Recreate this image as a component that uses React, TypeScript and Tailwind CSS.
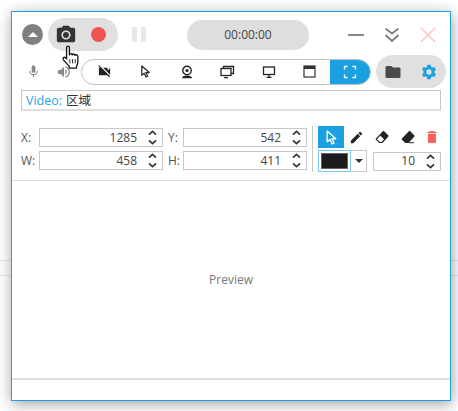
import type { ReactNode } from "react";
import {
  MdPhotoCamera,
  MdMic,
  MdVolumeUp,
  MdVideocamOff,
  MdFolder,
  MdSettings,
  MdEdit,
  MdDelete,
} from "react-icons/md";

const font = "font-['Open_Sans','Noto_Sans_CJK_SC',sans-serif]";

function Arrows() {
  return (
    <svg width="9" height="15" viewBox="0 0 9 15" fill="none" stroke="#333" strokeWidth="1.7">
      <path d="M1 4.6 4.5 1.4 8 4.6" />
      <path d="M1 10.4l3.5 3.2L8 10.4" />
    </svg>
  );
}

function NumberBox({ value, width }: { value: string; width: string }) {
  return (
    <div className={`${width} h-[19px] border border-[#c8c8c8] bg-white flex items-center justify-end pr-[5px] gap-[11px] text-[12px] text-[#444]`}>
      <span>{value}</span>
      <Arrows />
    </div>
  );
}

function Label({ children, width }: { children: ReactNode; width: string }) {
  return <span className={`${width} text-[12px] text-[#555]`}>{children}</span>;
}

function Pointer({ stroke = "#222", size = 14 }: { stroke?: string; size?: number }) {
  return (
    <svg width={size} height={size} viewBox="0 0 14 14">
      <path d="M3 1v10l2.6-2.2L7.6 13l1.8-.9-2-4H11z" fill="none" stroke={stroke} strokeWidth="1.3" strokeLinejoin="round" />
    </svg>
  );
}

function Webcam() {
  return (
    <svg width="14" height="14" viewBox="0 0 14 14">
      <circle cx="7" cy="5.5" r="4.2" fill="none" stroke="#222" strokeWidth="1.4" />
      <circle cx="7" cy="5.5" r="1.6" fill="#222" />
      <path d="M2 13.2c0-2 2-2.8 5-2.8s5 .8 5 2.8z" fill="#222" />
    </svg>
  );
}

function Screens() {
  return (
    <svg width="15" height="14" viewBox="0 0 15 14" fill="none" stroke="#222" strokeWidth="1.3">
      <path d="M3.5 3V1.5h10v7H11" />
      <rect x="1" y="3.5" width="10" height="7" fill="#fff" />
      <path d="M4 12.6h4" />
    </svg>
  );
}

function Desktop() {
  return (
    <svg width="14" height="14" viewBox="0 0 14 14" fill="none" stroke="#222" strokeWidth="1.3">
      <rect x="1.5" y="2" width="11" height="7.5" />
      <path d="M7 9.5v2.5M4.5 12.3h5" />
    </svg>
  );
}

function WindowIcon() {
  return (
    <svg width="13" height="13" viewBox="0 0 13 13">
      <rect x="1" y="1" width="11" height="11" fill="none" stroke="#333" strokeWidth="1.2" />
      <rect x="1" y="1" width="11" height="3" fill="#333" />
    </svg>
  );
}

function FullArea() {
  return (
    <svg width="14" height="14" viewBox="0 0 14 14" fill="none" stroke="#fff" strokeWidth="1.3">
      <path d="M1.5 4.5v-3h3M9.5 1.5h3v3M12.5 9.5v3h-3M4.5 12.5h-3v-3" />
    </svg>
  );
}

function Eraser({ outline }: { outline?: boolean }) {
  return (
    <svg width="14" height="14" viewBox="0 0 14 14">
      <path d="M8.5 1.5 13 6l-6 6.5H4.5L1.2 9.2z" fill={outline ? "#fff" : "#222"} stroke="#222" strokeWidth="1.2" strokeLinejoin="round" />
      {outline ? <path d="M8.5 1.5 13 6l-3.6 3.8L5 5.3z" fill="#222" /> : <path d="M8 12.7h5" stroke="#222" strokeWidth="1" />}
    </svg>
  );
}

function HandCursor() {
  return (
    <svg width="22" height="26" viewBox="0 0 20 24" className="absolute left-[5px] top-[20px] z-10">
      <path
        d="M5 2.2c0-1.6 2.6-1.6 2.6 0V9c.3-1.5 2.6-1.4 2.7.2.4-1.3 2.5-1.1 2.6.4.5-1 2.4-.8 2.5.8v5.2c0 1.8-.7 2.8-1.3 4.4v1.4H7.5v-1.6C6.3 18.2 3.6 15.7 2 13.5c-1-1.6.8-2.9 2-1.7l1 1z"
        fill="#fff"
        stroke="#111"
        strokeWidth="1.2"
        strokeLinejoin="round"
      />
      <path d="M8 13v4M10.5 13v4M13 13v4" stroke="#111" strokeWidth=".8" />
    </svg>
  );
}

export default function App() {
  return (
    <div className={`relative w-[458px] h-[411px] overflow-hidden bg-white ${font}`}>
      {/* page lines behind the window */}
      <div className="absolute left-0 right-0 top-[260px] h-px bg-[#e2e2e8]" />
      <div className="absolute left-0 right-0 top-[275px] h-px bg-[#e2e2e8]" />

      <div className="absolute left-[11px] top-[11px] w-[440px] h-[390px] flex flex-col bg-white border border-[#1ba1e2] shadow-[1px_3px_14px_rgba(0,0,0,0.38)]">
        {/* top row */}
        <div className="flex items-center h-[33px] mt-[6px] pl-[10px]">
          <div className="w-[21px] h-[21px] rounded-full bg-[#808080] flex items-center justify-center">
            <div className="w-0 h-0 border-x-[5px] border-x-transparent border-b-[5px] border-b-white" />
          </div>
          <div className="ml-[5px] w-[70px] h-[33px] rounded-full bg-[#e0e0e0] flex items-center pl-[8px] gap-[15px]">
            <div className="relative w-5 h-5">
              <MdPhotoCamera size={22} className="text-[#333] -ml-px -mt-px" />
              <HandCursor />
            </div>
            <div className="w-[15px] h-[15px] rounded-full bg-[#ef5350]" />
          </div>
          <div className="ml-[14px] flex gap-[4px]">
            <div className="w-[5px] h-[15px] bg-[#e8e8e8]" />
            <div className="w-[5px] h-[15px] bg-[#e8e8e8]" />
          </div>
          <div className="ml-[41px] w-[122px] h-[30px] rounded-full bg-[#dedede] flex items-center justify-center text-[12px] text-[#444]">
            00:00:00
          </div>
          <div className="ml-[39px] w-[16px] h-[2px] bg-[#888]" />
          <svg width="16" height="16" viewBox="0 0 16 16" className="ml-[20px]" fill="none" stroke="#808080" strokeWidth="2">
            <path d="m1.5 1.5 6.5 5 6.5-5M1.5 8l6.5 6 6.5-6" />
          </svg>
          <svg width="16" height="16" viewBox="0 0 16 16" className="ml-[20px]" fill="none" stroke="#ffc4c4" strokeWidth="1.6">
            <path d="m1 1 14 14M15 1 1 15" />
          </svg>
        </div>

        {/* source row */}
        <div className="flex items-center h-[33px] mt-[4px] pl-[14px]">
          <MdMic size={15} className="text-[#8a8a8a]" />
          <MdVolumeUp size={16} className="ml-[15px] text-[#8a8a8a]" />
          <div className="ml-[9px] w-[290px] h-[26px] rounded-full border border-[#c4c4c4] bg-white flex items-center overflow-hidden">
            <div className="w-[43px] flex justify-center pl-[2px]"><MdVideocamOff size={15} className="text-[#222]" /></div>
            <div className="w-[41px] flex justify-center"><Pointer size={13} /></div>
            <div className="w-[41px] flex justify-center"><Webcam /></div>
            <div className="w-[41px] flex justify-center"><Screens /></div>
            <div className="w-[41px] flex justify-center"><Desktop /></div>
            <div className="w-[41px] flex justify-center"><WindowIcon /></div>
            <div className="flex-1 h-full bg-[#1ba1e2] flex items-center justify-center"><FullArea /></div>
          </div>
          <div className="ml-[5px] w-[70px] h-[33px] rounded-full bg-[#e0e0e0] flex items-center pl-[8px] gap-[18px]">
            <MdFolder size={18} className="text-[#4a4a4a]" />
            <MdSettings size={18} className="text-[#1ba1e2]" />
          </div>
        </div>

        {/* video source */}
        <div className="mt-[2px] mx-[9px] h-[21px] border border-[#c8c8c8] border-b-2 border-b-[#dedede] flex items-center pl-[4px] pt-[2px] text-[12.5px] text-[#333]">
          <span className="text-[#2aa5e6]">Video:</span>
          <span className="ml-[4px]">区域</span>
        </div>

        {/* coordinates and tools */}
        <div className="flex mt-[15px] pl-[9px]">
          <div className="flex flex-col gap-[4px] pt-[2px]">
            <div className="flex items-center">
              <Label width="w-[18px]">X:</Label>
              <NumberBox value="1285" width="w-[124px]" />
              <Label width="w-[20px] pl-[5px]">Y:</Label>
              <NumberBox value="542" width="w-[124px]" />
            </div>
            <div className="flex items-center">
              <Label width="w-[18px]">W:</Label>
              <NumberBox value="458" width="w-[124px]" />
              <Label width="w-[20px] pl-[5px]">H:</Label>
              <NumberBox value="411" width="w-[124px]" />
            </div>
          </div>
          <div className="ml-[5px] w-px h-[46px] bg-[#c8c8c8]" />
          <div className="ml-[5px] flex flex-col">
            <div className="flex items-center h-[22px]">
              <div className="w-[26px] h-[22px] bg-[#1ba1e2] flex items-center justify-center"><Pointer stroke="#fff" size={15} /></div>
              <div className="w-[25px] flex justify-center"><MdEdit size={15} className="text-[#222]" /></div>
              <div className="w-[26px] flex justify-center"><Eraser outline /></div>
              <div className="w-[26px] flex justify-center"><Eraser /></div>
              <div className="w-[21px] flex justify-center"><MdDelete size={16} className="text-[#ff5c5c]" /></div>
            </div>
            <div className="flex items-center mt-[2px]">
              <div className="w-[33px] h-[22px] border border-[#7cc8f0] p-[2px] flex">
                <div className="flex-1 bg-[#1c1c1c] border border-[#666]" />
              </div>
              <div className="w-[16px] h-[22px] border border-l-0 border-[#c8c8c8] flex items-center justify-center">
                <div className="w-0 h-0 border-x-[4px] border-x-transparent border-t-[4px] border-t-[#333]" />
              </div>
              <div className="ml-[6px]"><NumberBox value="10" width="w-[68px]" /></div>
            </div>
          </div>
        </div>

        <div className="mt-[8px] h-px bg-[#dcdcdc]" />

        {/* preview */}
        <div className="flex-1 flex items-center justify-center text-[12px] text-[#777]">Preview</div>

        {/* status bar */}
        <div className="h-[22px] border-t-2 border-[#dedede]" />
      </div>
    </div>
  );
}
